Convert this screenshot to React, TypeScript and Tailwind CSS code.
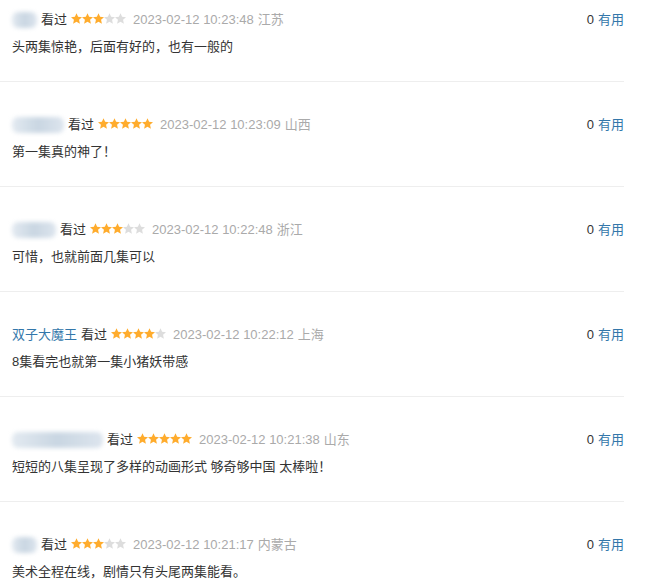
import React from 'react';

type Comment = {
  name?: string;
  blurWidth?: number;
  stars: number;
  time: string;
  region: string;
  text: string;
  votes: number;
};

const COMMENTS: Comment[] = [
  { blurWidth: 25, stars: 3, time: '2023-02-12 10:23:48', region: '江苏', text: '头两集惊艳，后面有好的，也有一般的', votes: 0 },
  { blurWidth: 52, stars: 5, time: '2023-02-12 10:23:09', region: '山西', text: '第一集真的神了！', votes: 0 },
  { blurWidth: 44, stars: 3, time: '2023-02-12 10:22:48', region: '浙江', text: '可惜，也就前面几集可以', votes: 0 },
  { name: '双子大魔王', stars: 4, time: '2023-02-12 10:22:12', region: '上海', text: '8集看完也就第一集小猪妖带感', votes: 0 },
  { blurWidth: 91, stars: 5, time: '2023-02-12 10:21:38', region: '山东', text: '短短的八集呈现了多样的动画形式 够奇够中国 太棒啦！', votes: 0 },
  { blurWidth: 25, stars: 3, time: '2023-02-12 10:21:17', region: '内蒙古', text: '美术全程在线，剧情只有头尾两集能看。', votes: 0 },
];

function Star({ on }: { on: boolean }) {
  return (
    <svg width="11" height="11" viewBox="1 1 22 21" className="shrink-0">
      <path
        d="M12 1l3.2 7.1 7.8.8-5.9 5.2 1.7 7.7L12 17.9l-6.8 3.9 1.7-7.7L1 8.9l7.8-.8z"
        fill={on ? '#ffac2d' : '#dddddd'}
      />
    </svg>
  );
}

function Rating({ value }: { value: number }) {
  return (
    <span className="inline-flex items-center">
      {[1, 2, 3, 4, 5].map((i) => (
        <Star key={i} on={i <= value} />
      ))}
    </span>
  );
}

export default function App() {
  return (
    <div
      className="w-[664px] h-[587px] overflow-hidden bg-white text-[13px] leading-5 text-[#333]"
      style={{ fontFamily: '"Liberation Sans", Arial, "Noto Sans CJK SC", sans-serif' }}
    >
      <div className="w-[624px]">
        {COMMENTS.map((c, i) => (
          <div
            key={i}
            className={`border-b border-[#eeeeee] pb-[24px] ${i === 0 ? 'pt-[10px]' : 'pt-[33px]'}`}
          >
            <div className="flex items-center justify-between">
              <div className="flex items-center pl-[12px]">
                {c.name ? (
                  <span className="text-[#3377aa]">{c.name}</span>
                ) : (
                  <span
                    className="inline-block h-[16px] rounded-[6px] bg-gradient-to-r from-[#e3eaf1] via-[#c9d6e2] to-[#dde5ee] blur-[2px]"
                    style={{ width: c.blurWidth }}
                  />
                )}
                <span className="ml-[4px]">看过</span>
                <span className="ml-[4px]">
                  <Rating value={c.stars} />
                </span>
                <span className="ml-[7px] text-[#aaaaaa]">{c.time}</span>
                <span className="ml-[4px] text-[#aaaaaa]">{c.region}</span>
              </div>
              <div>
                <span className="text-[#333]">{c.votes}</span>
                <span className="ml-[4px] text-[#3377aa]">有用</span>
              </div>
            </div>
            <p className="mt-[7px] pl-[12px]">{c.text}</p>
          </div>
        ))}
      </div>
    </div>
  );
}
